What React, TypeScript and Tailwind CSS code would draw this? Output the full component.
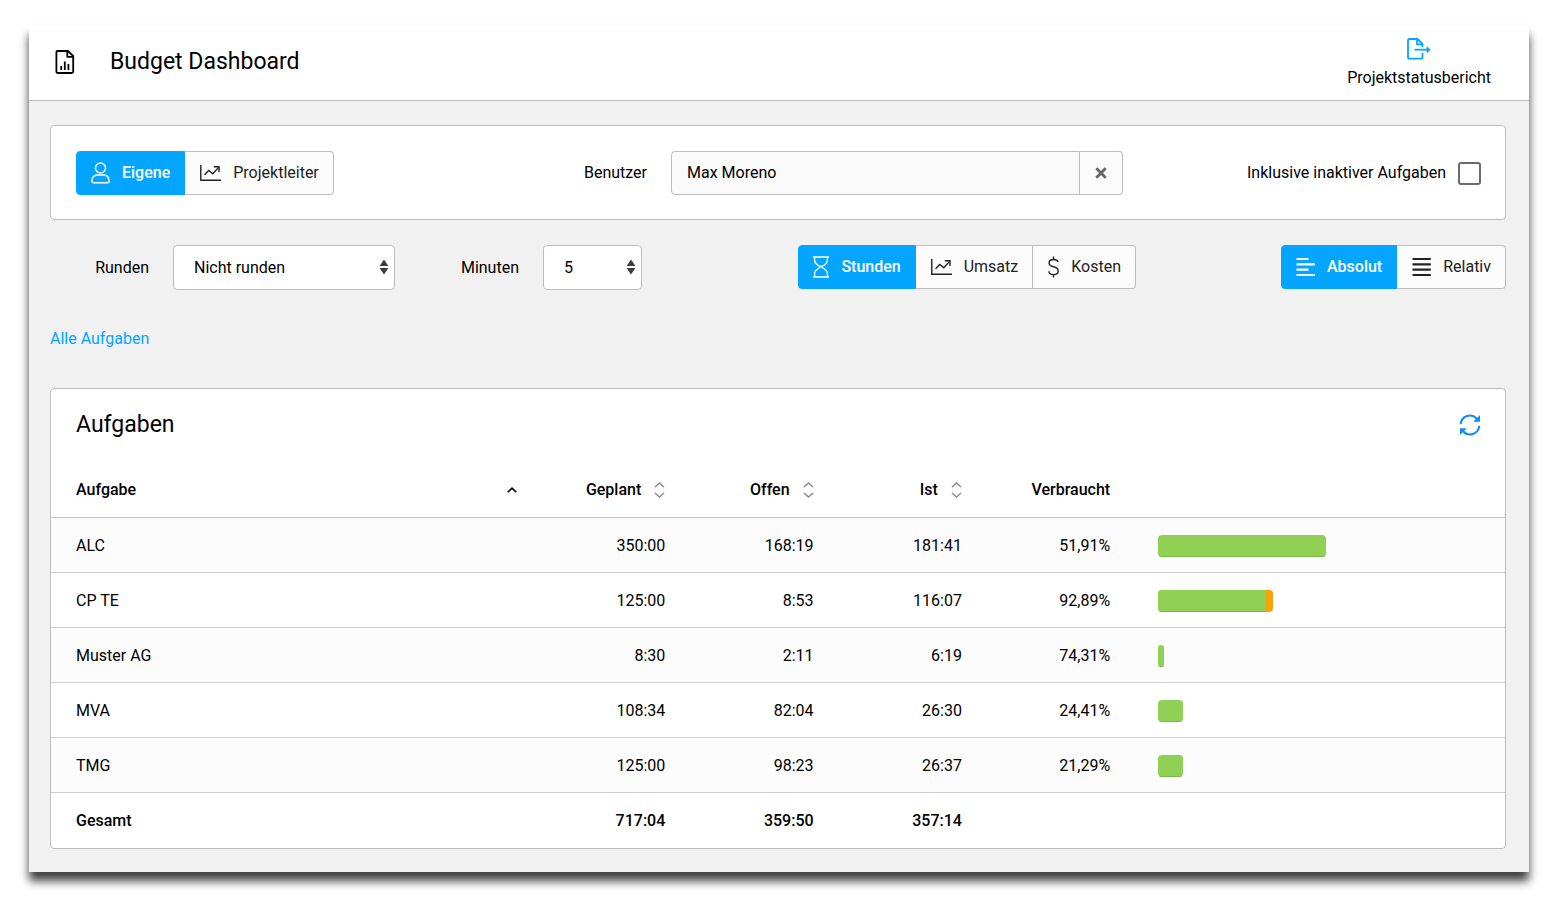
import React, { useState } from 'react';
import clsx from 'clsx';

interface Task {
  name: string;
  planned: string;
  open: string;
  actual: string;
  used: string;
  warn?: boolean;
}

const tasks: Task[] = [
  { name: 'ALC', planned: '350:00', open: '168:19', actual: '181:41', used: '51,91%' },
  { name: 'CP TE', planned: '125:00', open: '8:53', actual: '116:07', used: '92,89%', warn: true },
  { name: 'Muster AG', planned: '8:30', open: '2:11', actual: '6:19', used: '74,31%' },
  { name: 'MVA', planned: '108:34', open: '82:04', actual: '26:30', used: '24,41%' },
  { name: 'TMG', planned: '125:00', open: '98:23', actual: '26:37', used: '21,29%' },
];

const toHours = (value: string) => {
  const [hours, minutes] = value.split(':').map(Number);
  return hours + minutes / 60;
};

const maxPlanned = Math.max(...tasks.map(task => toHours(task.planned)));

// Icons
const ReportIcon = () => (
  <svg width="20" height="24" viewBox="0 0 20 24" fill="none" stroke="currentColor" strokeWidth="1.8" strokeLinejoin="round">
    <path d="M2.4 1H13L18.2 6.2V21.5Q18.2 23 16.7 23H2.9Q1.4 23 1.4 21.5V2Q1.4 1 2.4 1Z" />
    <path d="M12.3 1V6.8H18.2" />
    <path d="M6.2 20V16M9.8 20V11.5M13.4 20V14" />
  </svg>
);

const ExportIcon = () => (
  <svg width="24" height="22" viewBox="0 0 24 22" fill="none" stroke="currentColor" strokeWidth="1.8" strokeLinejoin="round">
    <path d="M15.5 14.8V19Q15.5 20.7 14 20.7H2.4Q1 20.7 1 19.3V2.4Q1 1 2.4 1H10.5L15.5 6V9" />
    <path d="M10 1.2V6.3H15.3" />
    <path d="M7.5 11.7H21" />
    <path d="M20 8.8L23.2 11.7L20 14.6Z" fill="currentColor" strokeWidth="0.8" />
  </svg>
);

const UserIcon = () => (
  <svg width="19" height="22" viewBox="0 0 19 22" fill="none" stroke="currentColor" strokeWidth="1.4" strokeLinejoin="round">
    <circle cx="9.5" cy="6" r="5" />
    <path d="M5.5 13H13.5Q18.1 14 18.1 19Q18.1 20.8 16.3 20.8H2.7Q0.9 20.8 0.9 19Q0.9 14 5.5 13Z" />
  </svg>
);

const ChartIcon = () => (
  <svg width="21" height="18" viewBox="0 0 21 18" fill="none" stroke="currentColor" strokeWidth="1.4">
    <path d="M0.8 1V16.3H21" />
    <path d="M4.6 10.8L8.8 6.4L12.8 9.8L18.6 3.4" />
    <path d="M13.8 2.8H19V8" />
  </svg>
);

const HourglassIcon = () => (
  <svg width="16" height="22" viewBox="0 0 16 22" fill="none" stroke="currentColor" strokeWidth="1.3">
    <path d="M0 1H16M0 21H16" />
    <path d="M1.6 1V4Q1.6 7 4.5 9L6.8 10.2H9.2L11.5 9Q14.4 7 14.4 4V1" />
    <path d="M1.6 21V18Q1.6 15 4.5 13L8 10.5L11.5 13Q14.4 15 14.4 18V21" />
  </svg>
);

const DollarIcon = () => (
  <svg width="11" height="22" viewBox="0 0 11 22" fill="none" stroke="currentColor" strokeWidth="1.4">
    <path d="M5.5 0.5V3.5M5.5 18.5V21.5" />
    <path d="M10 6.2Q9.5 3.5 5.5 3.5Q1.1 3.5 1.1 7Q1.1 9.8 5.5 10.8Q10.2 11.9 10.2 15Q10.2 18.6 5.5 18.6Q1.1 18.6 0.8 15.2" />
  </svg>
);

const BarsLeftIcon = () => (
  <svg width="19" height="20" viewBox="0 0 19 20" stroke="currentColor" strokeWidth="2.2">
    <path d="M0.5 2H12.5M0.5 7.3H18.8M0.5 12.6H12.5M0.5 18H18.8" />
  </svg>
);

const BarsFullIcon = () => (
  <svg width="19" height="20" viewBox="0 0 19 20" stroke="currentColor" strokeWidth="2.2">
    <path d="M0.5 2H18.8M0.5 7.3H18.8M0.5 12.6H18.8M0.5 18H18.8" />
  </svg>
);

const RefreshIcon = () => (
  <svg width="22" height="22" viewBox="0 0 22 22" fill="none" stroke="currentColor" strokeWidth="2">
    <path d="M1.7 10.2A9.2 9.2 0 0 1 18 5" />
    <path d="M20.3 11.8A9.2 9.2 0 0 1 4 17" />
    <path d="M21 1V7.8H14.2Z" fill="currentColor" stroke="none" />
    <path d="M1 21V14.2H7.8Z" fill="currentColor" stroke="none" />
  </svg>
);

const ClearIcon = () => (
  <svg width="12" height="12" viewBox="0 0 12 12" stroke="currentColor" strokeWidth="2.8">
    <path d="M1.3 1.3L10.7 10.7M10.7 1.3L1.3 10.7" />
  </svg>
);

const SortIcon = () => (
  <svg width="11" height="16" viewBox="0 0 11 16" fill="none" stroke="#8a8a8a" strokeWidth="1.5">
    <path d="M1 5L5.5 1L10 5M1 11L5.5 15L10 11" />
  </svg>
);

const SortUpIcon = () => (
  <svg width="10" height="6" viewBox="0 0 10 6" fill="none" stroke="currentColor" strokeWidth="1.7">
    <path d="M0.8 5.2L5 1.2L9.2 5.2" />
  </svg>
);

interface Option {
  label: string;
  icon: React.ReactNode;
}

const ButtonGroup = ({ options }: { options: Option[] }) => {
  const [active, setActive] = useState(0);

  return (
    <div className="flex h-11 shrink-0">
      {options.map((option, index) => (
        <button
          key={option.label}
          type="button"
          aria-pressed={index === active}
          onClick={() => setActive(index)}
          className={clsx(
            'flex items-center gap-3 border-y border-r pl-[15px] pr-[14px] first:rounded-l first:border-l first:pl-[14px] last:rounded-r',
            index === active
              ? 'border-[#04a5ff] bg-[#04a5ff] font-medium text-white'
              : 'border-[#bdbdbd] bg-[#fcfcfc] text-[#222]'
          )}
        >
          {option.icon}
          {option.label}
        </button>
      ))}
    </div>
  );
};

interface SelectFieldProps {
  id: string;
  label: string;
  options: string[];
  className: string;
}

const SelectField = ({ id, label, options, className }: SelectFieldProps) => (
  <div className="flex items-center justify-end gap-6">
    <label htmlFor={id}>{label}</label>
    <div className={clsx('relative', className)}>
      <select id={id} className="h-[45px] w-full appearance-none rounded border border-[#bdbdbd] bg-white pl-5 pr-6">
        {options.map(option => (
          <option key={option}>{option}</option>
        ))}
      </select>
      <svg width="10" height="16" viewBox="0 0 10 16" fill="#3c3c3c" className="pointer-events-none absolute right-[6px] top-[14px]">
        <path d="M5 0.5L9.4 6.9H0.6ZM5 15.5L0.6 9.1H9.4Z" />
      </svg>
    </div>
  </div>
);

const App = () => {
  const [user, setUser] = useState('Max Moreno');

  return (
    <div className="min-h-screen bg-white pb-7 pl-[29px] pr-[31px] pt-[26px] font-['Roboto',sans-serif] text-base text-black">
      <div className="bg-[#f1f1f1] shadow-[0_9px_9px_rgba(0,0,0,0.75)]">
        {/* Header */}
        <header className="flex h-[75px] items-center justify-between border-b border-[#bdbdbd] bg-white pl-[26px] pr-[38px]">
          <div className="flex items-center gap-[35px] pb-[2px]">
            <ReportIcon />
            <h1 className="text-[23px] leading-8">Budget Dashboard</h1>
          </div>
          <button type="button" className="flex flex-col items-center gap-[6px] pt-[2px]">
            <span className="text-[#04a5ff]">
              <ExportIcon />
            </span>
            Projektstatusbericht
          </button>
        </header>

        <main className="pb-[23px] pl-[21px] pr-[23px] pt-6">
          {/* User filter */}
          <section className="grid grid-cols-[571fr_452fr_334fr] gap-6 rounded border border-[#bdbdbd] bg-white pb-6 pl-[25px] pr-6 pt-[25px]">
            <div className="flex items-center justify-between">
              <ButtonGroup
                options={[
                  { label: 'Eigene', icon: <UserIcon /> },
                  { label: 'Projektleiter', icon: <ChartIcon /> },
                ]}
              />
              <label htmlFor="user">Benutzer</label>
            </div>
            <div className="flex h-11">
              <input
                id="user"
                type="text"
                value={user}
                onChange={e => setUser(e.target.value)}
                className="min-w-0 flex-1 rounded-l border border-[#bdbdbd] bg-[#fafafa] px-[15px]"
              />
              <button
                type="button"
                aria-label="Benutzer entfernen"
                onClick={() => setUser('')}
                className="flex w-[43px] items-center justify-center rounded-r border-y border-r border-[#bdbdbd] bg-[#fcfcfc] text-[#666]"
              >
                <ClearIcon />
              </button>
            </div>
            <label className="flex items-center justify-end gap-3">
              Inklusive inaktiver Aufgaben
              <input type="checkbox" className="h-[23px] w-[23px] appearance-none rounded-[3px] border-2 border-[#6b6b6b] bg-white checked:bg-[#04a5ff]" />
            </label>
          </section>

          {/* Display options */}
          <section className="mt-[25px] grid grid-cols-[345fr_247fr_494fr_370fr]">
            <SelectField id="rounding" label="Runden" options={['Nicht runden', 'Aufrunden', 'Abrunden']} className="w-[222px]" />
            <SelectField id="minutes" label="Minuten" options={['5', '10', '15']} className="w-[99px]" />
            <div className="flex justify-end">
              <ButtonGroup
                options={[
                  { label: 'Stunden', icon: <HourglassIcon /> },
                  { label: 'Umsatz', icon: <ChartIcon /> },
                  { label: 'Kosten', icon: <DollarIcon /> },
                ]}
              />
            </div>
            <div className="flex justify-end">
              <ButtonGroup
                options={[
                  { label: 'Absolut', icon: <BarsLeftIcon /> },
                  { label: 'Relativ', icon: <BarsFullIcon /> },
                ]}
              />
            </div>
          </section>

          <nav className="mt-[37px] h-6">
            <a href="#aufgaben" className="text-[#04a5ff]">
              Alle Aufgaben
            </a>
          </nav>

          {/* Tasks */}
          <section id="aufgaben" className="mt-[37px] overflow-hidden rounded border border-[#bdbdbd] bg-white">
            <div className="flex h-[74px] items-center justify-between pb-[2px] pl-[25px] pr-6">
              <h2 className="text-[23px] leading-8">Aufgaben</h2>
              <button type="button" aria-label="Aktualisieren" className="text-[#0f8cf5]">
                <RefreshIcon />
              </button>
            </div>
            <table className="w-full table-fixed border-separate border-spacing-0 text-right">
              <thead>
                <tr className="h-[55px] [&>th]:border-b [&>th]:border-[#c4c4c4] [&>th]:font-medium">
                  <th className="w-[33.7%] pl-[25px] pr-6">
                    <div className="flex items-center justify-between">
                      Aufgabe
                      <SortUpIcon />
                    </div>
                  </th>
                  {['Geplant', 'Offen', 'Ist'].map(title => (
                    <th key={title} className="w-[10.2%] pr-6">
                      <div className="flex items-center justify-end gap-[13px]">
                        {title}
                        <SortIcon />
                      </div>
                    </th>
                  ))}
                  <th className="w-[10.2%] pr-6">Verbraucht</th>
                  <th></th>
                </tr>
              </thead>
              <tbody>
                {tasks.map(task => {
                  const filled = task.warn ? task.planned : task.actual;
                  return (
                    <tr key={task.name} className="h-[55px] odd:bg-[#fcfcfc] [&>td]:border-b [&>td]:border-[#d0d0d0] [&>td]:pt-[2px]">
                      <td className="pl-[25px] text-left">{task.name}</td>
                      <td className="pr-6">{task.planned}</td>
                      <td className="pr-6">{task.open}</td>
                      <td className="pr-6">{task.actual}</td>
                      <td className="pr-6">{task.used}</td>
                      <td className="px-6">
                        <div
                          className="flex h-[22px] overflow-hidden rounded bg-[#f9a10a]"
                          style={{ width: `${(toHours(filled) / maxPlanned) * 100}%` }}
                        >
                          <div
                            className="border-b border-[#7ab648] bg-[#8fd055]"
                            style={{ width: `${(toHours(task.actual) / toHours(filled)) * 100}%` }}
                          />
                        </div>
                      </td>
                    </tr>
                  );
                })}
              </tbody>
              <tfoot>
                <tr className="h-[55px] font-medium">
                  <td className="pl-[25px] text-left">Gesamt</td>
                  <td className="pr-6">717:04</td>
                  <td className="pr-6">359:50</td>
                  <td className="pr-6">357:14</td>
                  <td></td>
                  <td></td>
                </tr>
              </tfoot>
            </table>
          </section>
        </main>
      </div>
    </div>
  );
};

export default App;
